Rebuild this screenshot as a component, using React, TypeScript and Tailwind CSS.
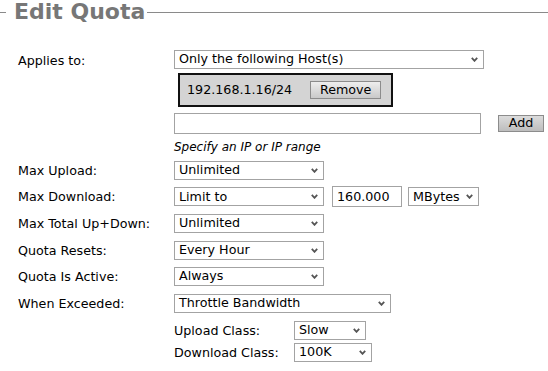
import React from "react";

const font = { fontFamily: '"DejaVu Sans", Verdana, sans-serif' };

function Chevron() {
  return (
    <svg width="7" height="5" viewBox="0 0 7 5" className="shrink-0">
      <path d="M0.8 0.8 L3.5 3.8 L6.2 0.8" fill="none" stroke="#555" strokeWidth="1.8" />
    </svg>
  );
}

function FakeSelect({ value, w }: { value: string; w: string }) {
  return (
    <div className={`${w} h-[19px] border border-[#a3a3a3] bg-white flex items-center justify-between pl-[4px] pr-[5px]`}>
      <span className="text-[12.7px] leading-none text-black">{value}</span>
      <Chevron />
    </div>
  );
}

function Row({ label, children }: { label: string; children: React.ReactNode }) {
  return (
    <div className="flex items-center h-[26.6px]">
      <div className="w-[174px] pl-[18px] text-[12.7px] text-black">{label}</div>
      <div className="flex items-center gap-[8px]">{children}</div>
    </div>
  );
}

export default function App() {
  return (
    <div className="w-[548px] h-[371px] bg-white overflow-hidden text-black" style={font}>
      {/* legend */}
      <div className="flex items-center h-[24px]">
        <div className="w-[6px] h-px bg-[#8a8a8a]" />
        <span className="pl-[8px] pr-[2px] text-[22px] font-bold text-[#777] leading-none">Edit Quota</span>
        <div className="flex-1 h-px bg-[#8a8a8a]" />
      </div>

      <div className="mt-[26px]">
        <div className="flex">
          <div className="w-[174px] pl-[18px] text-[12.7px] pt-[1px]">Applies to:</div>
          <div className="flex flex-col">
            <FakeSelect value="Only the following Host(s)" w="w-[310px]" />
            <div className="mt-[4px] ml-[4px] w-[215px] h-[34px] bg-[#d4d4d4] border-2 border-[#111] flex items-center pl-[7px] gap-[18px]">
              <span className="text-[12.7px]">192.168.1.16/24</span>
              <button className="w-[71px] h-[18px] border border-[#8c8c8c] bg-gradient-to-b from-[#eeeeee] to-[#c9c9c9] text-[12.7px] leading-none">
                Remove
              </button>
            </div>
            <div className="mt-[6px] flex items-center">
              <div className="w-[307px] h-[21px] border border-[#a3a3a3] bg-white" />
              <button className="ml-[17px] w-[46px] h-[17px] border border-[#8c8c8c] bg-gradient-to-b from-[#dcdcdc] to-[#bdbdbd] text-[12.7px] leading-none">
                Add
              </button>
            </div>
            <div className="mt-[4px] text-[12px] italic">Specify an IP or IP range</div>
          </div>
        </div>

        <div className="mt-[1px]">
          <Row label="Max Upload:">
            <FakeSelect value="Unlimited" w="w-[150px]" />
          </Row>
          <Row label="Max Download:">
            <FakeSelect value="Limit to" w="w-[150px]" />
            <div className="w-[70px] h-[21px] border border-[#a3a3a3] bg-white flex items-center pl-[4px] text-[12.7px]">
              160.000
            </div>
            <div className="-ml-[2px]">
              <FakeSelect value="MBytes" w="w-[71px]" />
            </div>
          </Row>
          <Row label="Max Total Up+Down:">
            <FakeSelect value="Unlimited" w="w-[150px]" />
          </Row>
          <Row label="Quota Resets:">
            <FakeSelect value="Every Hour" w="w-[150px]" />
          </Row>
          <Row label="Quota Is Active:">
            <FakeSelect value="Always" w="w-[150px]" />
          </Row>
          <Row label="When Exceeded:">
            <FakeSelect value="Throttle Bandwidth" w="w-[217px]" />
          </Row>
          <div className="pl-[174px] flex flex-col gap-[3px] mt-[4px]">
            <div className="flex items-center">
              <span className="w-[120px] text-[12.7px]">Upload Class:</span>
              <FakeSelect value="Slow" w="w-[72px]" />
            </div>
            <div className="flex items-center">
              <span className="w-[120px] text-[12.7px]">Download Class:</span>
              <FakeSelect value="100K" w="w-[78px]" />
            </div>
          </div>
        </div>
      </div>
    </div>
  );
}
